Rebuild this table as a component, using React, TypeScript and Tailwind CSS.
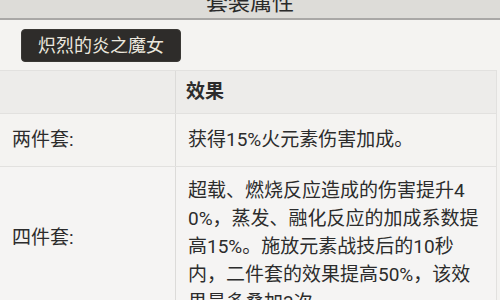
const FONT = "font-['Roboto','Noto_Sans_CJK_SC',sans-serif]";

const fourPiece = [
  '超载、燃烧反应造成的伤害提升4',
  '0%，蒸发、融化反应的加成系数提',
  '高15%。施放元素战技后的10秒',
  '内，二件套的效果提高50%，该效',
  '果最多叠加3次。',
];

export default function App() {
  return (
    <div className={`w-[500px] h-[300px] overflow-hidden bg-[#f4f3f1] text-[#2c2c2c] ${FONT}`}>
      {/* title bar, cut off at the top */}
      <div className="h-[20px] bg-[#dddcd8] border-b-2 border-[#a9a8a6] flex justify-center overflow-hidden">
        <span className="text-[22px] leading-[22px] -mt-[8px] text-[#2a2a2a]">套装属性</span>
      </div>

      <div className="h-[50px] pl-[21px] pt-[9px]">
        <div className="w-[160px] h-[33px] rounded-[4px] bg-[#2e2c2a] border border-[#3a3835] flex items-center justify-center">
          <span className="text-[18px] leading-none text-[#ebe7de]">炽烈的炎之魔女</span>
        </div>
      </div>

      <div className="w-[497px] border-t border-r border-[#e2e1df]">
        <div className="flex h-[43px] bg-[#edecea] border-b border-[#e2e1df]">
          <div className="w-[176px] border-r border-[#dcdbd9]" />
          <div className="flex-1 flex items-center pl-[10px] text-[19px] font-bold">效果</div>
        </div>

        <div className="flex h-[53px] bg-[#f4f3f1] border-b border-[#e2e1df]">
          <div className="w-[176px] border-r border-[#dcdbd9] flex items-center pl-[12px] text-[19px]">两件套:</div>
          <div className="flex-1 flex items-center pl-[12px] text-[19px]">获得15%火元素伤害加成。</div>
        </div>

        <div className="flex bg-[#f5f4f3]">
          <div className="w-[176px] border-r border-[#dcdbd9] pl-[12px] pt-[57px] text-[19px] leading-[28px]">四件套:</div>
          <div className="flex-1 pl-[12px] pt-[10px] text-[19px] leading-[28px]">
            {fourPiece.map((line) => (
              <div key={line} className="whitespace-nowrap">{line}</div>
            ))}
          </div>
        </div>
      </div>
    </div>
  );
}
